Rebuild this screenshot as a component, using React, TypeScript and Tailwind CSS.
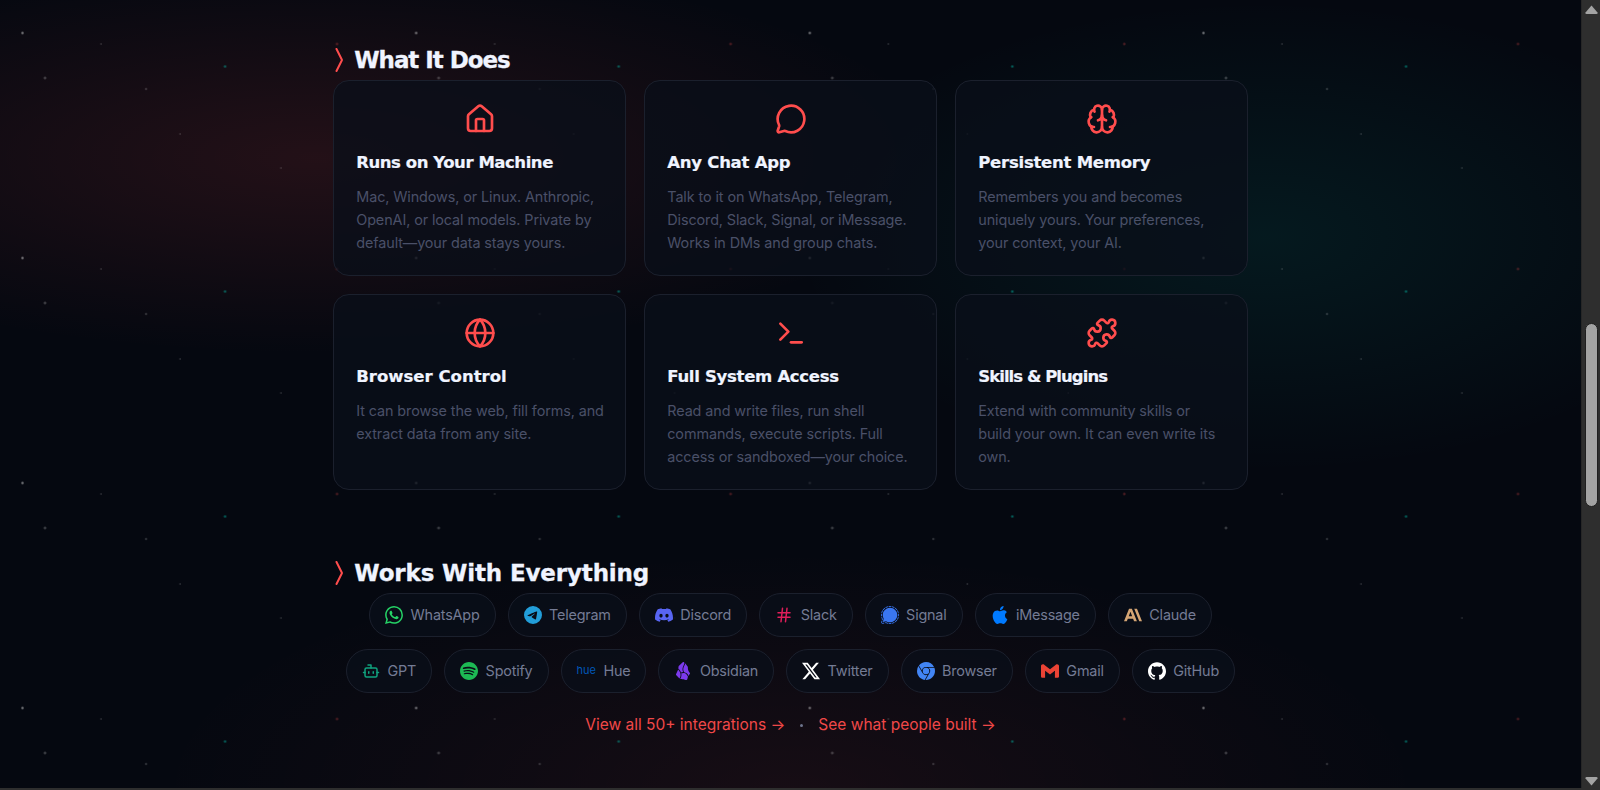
import React from "react";
import { House, MessageCircle, Brain, Globe, Terminal, Puzzle, Hash, Bot } from "lucide-react";
import {
  SiWhatsapp, SiTelegram, SiDiscord, SiSignal, SiApple, SiAnthropic, SiSpotify,
  SiObsidian, SiX, SiGooglechrome, SiGmail, SiGithub,
} from "react-icons/si";

const cards = [
  { Icon: House, track: "tracking-[-0.45px]", title: "Runs on Your Machine", text: "Mac, Windows, or Linux. Anthropic, OpenAI, or local models. Private by default—your data stays yours." },
  { Icon: MessageCircle, track: "tracking-[-0.25px]", title: "Any Chat App", text: "Talk to it on WhatsApp, Telegram, Discord, Slack, Signal, or iMessage. Works in DMs and group chats." },
  { Icon: Brain, track: "tracking-[-0.25px]", title: "Persistent Memory", text: "Remembers you and becomes uniquely yours. Your preferences, your context, your AI." },
  { Icon: Globe, track: "tracking-[0px]", title: "Browser Control", text: "It can browse the web, fill forms, and extract data from any site." },
  { Icon: Terminal, track: "tracking-[-0.3px]", title: "Full System Access", text: "Read and write files, run shell commands, execute scripts. Full access or sandboxed—your choice." },
  { Icon: Puzzle, track: "tracking-[-0.95px]", title: "Skills & Plugins", text: "Extend with community skills or\nbuild your own. It can even write its own." },
];

const row1 = [
  { name: "WhatsApp", icon: <SiWhatsapp size={18} className="text-[#25d366]" /> },
  { name: "Telegram", icon: <SiTelegram size={18} className="text-[#229ed9]" /> },
  { name: "Discord", icon: <SiDiscord size={18} className="text-[#5865f2]" /> },
  { name: "Slack", icon: <Hash size={18} className="text-[#e01e5a]" /> },
  { name: "Signal", icon: <SiSignal size={18} className="text-[#3a76f0]" /> },
  { name: "iMessage", icon: <SiApple size={18} className="text-[#007aff]" /> },
  { name: "Claude", icon: <SiAnthropic size={18} className="text-[#d4a574]" /> },
];

const row2 = [
  { name: "GPT", icon: <Bot size={18} className="text-[#10a37f]" /> },
  { name: "Spotify", icon: <SiSpotify size={18} className="text-[#1db954]" /> },
  { name: "Hue", icon: <span className="text-[11px] leading-none text-[#0057b8] -translate-y-px">hue</span> },
  { name: "Obsidian", icon: <SiObsidian size={18} className="text-[#7c3aed]" /> },
  { name: "Twitter", icon: <SiX size={18} className="text-white" /> },
  { name: "Browser", icon: <SiGooglechrome size={18} className="text-[#4285f4]" /> },
  { name: "Gmail", icon: <SiGmail size={18} className="text-[#ea4335]" /> },
  { name: "GitHub", icon: <SiGithub size={18} className="text-white" /> },
];

function Heading({ children, track }: { children: React.ReactNode; track: string }) {
  return (
    <div className="flex items-center h-[30px]">
      <svg width="9" height="24" viewBox="0 0 9 24" className="ml-[1.5px] text-[#ff4d4d] shrink-0" fill="none" stroke="currentColor" strokeWidth="2" strokeLinecap="round" strokeLinejoin="bevel">
        <polyline points="1.5,1 7,12 1.5,23" />
      </svg>
      <h2 className={`ml-[10.5px] font-['DejaVu_Sans',sans-serif] font-bold text-[23px] leading-[30px] [-webkit-text-stroke:0.3px_#f0f4ff] text-[#f0f4ff] ${track}`}>
        {children}
      </h2>
    </div>
  );
}

function Pill({ name, icon }: { name: string; icon: React.ReactNode }) {
  return (
    <div className="flex items-center gap-[7.5px] h-[44px] px-[15px] rounded-full border border-[#1b202d] bg-[rgba(10,15,26,0.75)]">
      {icon}
      <span className="text-[14.4px] tracking-[-0.2px] text-[#747b94]">{name}</span>
    </div>
  );
}

export default function App() {
  return (
    <div className="h-[790px] w-full overflow-hidden flex flex-col bg-[#2e2e2e] font-['Inter',sans-serif]">
      <div className="flex flex-1 min-h-0">
        <main className="relative flex-1 min-w-0 bg-[#050810] bg-[radial-gradient(ellipse_80%_50%_at_20%_20%,rgba(255,77,77,0.12),transparent_50%),radial-gradient(ellipse_60%_60%_at_80%_30%,rgba(0,229,204,0.08),transparent_50%),radial-gradient(ellipse_80%_60%_at_50%_100%,rgba(255,77,77,0.07),transparent_50%)]">
          <div className="absolute inset-0 bg-size-[393.67px_225px] bg-[radial-gradient(2px_2px_at_22.5px_33px,rgba(255,255,255,0.5),transparent),radial-gradient(2px_2px_at_45px_78px,rgba(255,255,255,0.3),transparent),radial-gradient(1px_1px_at_101px_44px,rgba(255,255,255,0.35),transparent),radial-gradient(1.7px_1.7px_at_146px_89px,rgba(255,255,255,0.25),transparent),radial-gradient(1px_1px_at_180px_134px,rgba(255,255,255,0.35),transparent),radial-gradient(2px_2px_at_225px_66.5px,rgba(0,229,204,0.45),transparent),radial-gradient(1.2px_1.2px_at_281px_168px,rgba(255,255,255,0.25),transparent),radial-gradient(2px_2px_at_337px_44px,rgba(255,77,77,0.35),transparent)]" />
          <div className="relative mx-auto w-[914.5px] pt-[45px]">
            <Heading track="tracking-[-1.05px]">What It Does</Heading>
            <div className="mt-[5px] grid grid-cols-3 gap-x-[18.5px] gap-y-[18px]">
              {cards.map(({ Icon, title, text, track }) => (
                <div key={title} className="h-[196px] rounded-2xl border border-[#1b202d] bg-[rgba(10,15,26,0.75)] pl-[22px] pr-[18px] pt-[22px]">
                  <div className="flex justify-center pr-[4px]">
                    <Icon size={32} strokeWidth={2} className="text-[#ff4d4d]" />
                  </div>
                  <h3 className={`mt-[12px] font-['DejaVu_Sans',sans-serif] font-bold text-[16.5px] leading-[31px] [-webkit-text-stroke:0.2px_#f0f4ff] text-[#f0f4ff] ${track}`}>{title}</h3>
                  <p className="mt-[7px] whitespace-pre-line text-[14.4px] leading-[23.2px] tracking-[-0.1px] text-[#4a5068]">{text}</p>
                </div>
              ))}
            </div>
            <div className="mt-[68px]">
              <Heading track="tracking-[-0.15px]">Works With Everything</Heading>
            </div>
            <div className="mt-[5px] flex flex-col gap-3 items-center">
              <div className="flex justify-center gap-3">
                {row1.map((p) => <Pill key={p.name} {...p} />)}
              </div>
              <div className="flex justify-center gap-3">
                {row2.map((p) => <Pill key={p.name} {...p} />)}
              </div>
            </div>
            <div className="mt-[20px] flex justify-center items-center gap-[15px] text-[15.5px] leading-[24px] text-[#f04848]">
              <span>View all 50+ integrations →</span>
              <span className="size-[3px] rounded-full bg-[#6d748c]" />
              <span>See what people built →</span>
            </div>
          </div>
        </main>
        <aside className="w-[19px] shrink-0 bg-[#2e2e2e] flex flex-col items-center border-l border-[#262626]">
          <svg width="13" height="9" viewBox="0 0 13 9" className="mt-[5px] text-[#a3a3a3]" fill="currentColor"><path d="M6.5 0.5 L12.5 7.5 Q13 9 11.5 9 L1.5 9 Q0 9 0.5 7.5 Z" /></svg>
          <div className="mt-[309px] h-[184px] w-[13px] rounded-full bg-[#a3a3a3] border border-[#1f1f1f]" />
          <div className="flex-1" />
          <svg width="13" height="9" viewBox="0 0 13 9" className="mb-[2px] text-[#a3a3a3]" fill="currentColor"><path d="M6.5 8.5 L12.5 1.5 Q13 0 11.5 0 L1.5 0 Q0 0 0.5 1.5 Z" /></svg>
        </aside>
      </div>
      <div className="h-[2px] shrink-0 bg-[#2e2e2e]" />
    </div>
  );
}
